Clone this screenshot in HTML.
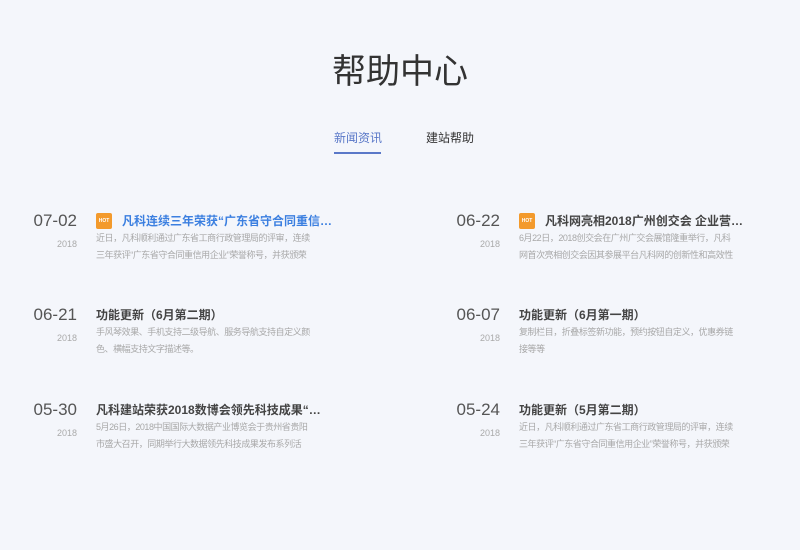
<!DOCTYPE html>
<html><head><meta charset="utf-8"><style>
*{margin:0;padding:0;box-sizing:border-box}
body{width:800px;height:550px;background:#f4f6fb;font-family:"Liberation Sans","Noto Sans CJK SC",sans-serif;position:relative;overflow:hidden}
h1{position:absolute;top:50px;left:0;width:800px;text-align:center;font-size:34px;font-weight:normal;color:#333;line-height:44px}
.tab{position:absolute;top:130px;font-size:12px;line-height:16px}
.t1{left:334px;color:#5a78c8}
.t2{left:426px;color:#333}
.line{position:absolute;left:334px;top:152px;width:47px;height:2px;background:#5a78c8}
.item{position:absolute;width:330px;height:60px}
.d{position:absolute;left:-20px;top:0;width:62px;text-align:right;font-size:17px;color:#555;line-height:20px;white-space:nowrap}
.y{position:absolute;left:0;top:27px;width:42px;text-align:right;font-size:9px;color:#aaa;line-height:12px}
.tt{position:absolute;left:61px;top:1px;font-size:12px;font-weight:bold;color:#444;line-height:18px;white-space:nowrap}
.tt.blue{color:#3b7fe0}
.hot{display:inline-block;width:16px;height:16px;background:#f39a2c;border-radius:2px;color:#fff;font-size:5px;line-height:16px;text-align:center;vertical-align:top;margin:1px 10px 0 0;font-weight:bold}
.ds{position:absolute;left:61px;top:19px;width:214px;font-size:9px;letter-spacing:-0.45px;color:#a8a8a8;line-height:17px;height:34px;overflow:hidden;line-break:anywhere;word-break:break-all}
</style></head><body>
<h1>帮助中心</h1>
<div class="tab t1">新闻资讯</div><div class="tab t2">建站帮助</div><div class="line"></div>

<div class="item" style="left:35px;top:211px"><div class="d">07-02</div><div class="y">2018</div>
<div class="tt blue"><span class="hot">HOT</span>凡科连续三年荣获“广东省守合同重信…</div>
<div class="ds">近日，凡科顺利通过广东省工商行政管理局的评审，连续三年获评“广东省守合同重信用企业”荣誉称号，并获颁荣</div></div>

<div class="item" style="left:458px;top:211px"><div class="d">06-22</div><div class="y">2018</div>
<div class="tt"><span class="hot">HOT</span>凡科网亮相2018广州创交会 企业营…</div>
<div class="ds">6月22日，2018创交会在广州广交会展馆隆重举行，凡科网首次亮相创交会因其参展平台凡科网的创新性和高效性</div></div>

<div class="item" style="left:35px;top:305px"><div class="d">06-21</div><div class="y">2018</div>
<div class="tt">功能更新（6月第二期）</div>
<div class="ds">手风琴效果、手机支持二级导航、服务导航支持自定义颜色、横幅支持文字描述等。</div></div>

<div class="item" style="left:458px;top:305px"><div class="d">06-07</div><div class="y">2018</div>
<div class="tt">功能更新（6月第一期）</div>
<div class="ds">复制栏目，折叠标签新功能，预约按钮自定义，优惠券链接等等</div></div>

<div class="item" style="left:35px;top:400px"><div class="d">05-30</div><div class="y">2018</div>
<div class="tt">凡科建站荣获2018数博会领先科技成果“…</div>
<div class="ds">5月26日，2018中国国际大数据产业博览会于贵州省贵阳市盛大召开，同期举行大数据领先科技成果发布系列活</div></div>

<div class="item" style="left:458px;top:400px"><div class="d">05-24</div><div class="y">2018</div>
<div class="tt">功能更新（5月第二期）</div>
<div class="ds">近日，凡科顺利通过广东省工商行政管理局的评审，连续三年获评“广东省守合同重信用企业”荣誉称号，并获颁荣</div></div>
</body></html>
